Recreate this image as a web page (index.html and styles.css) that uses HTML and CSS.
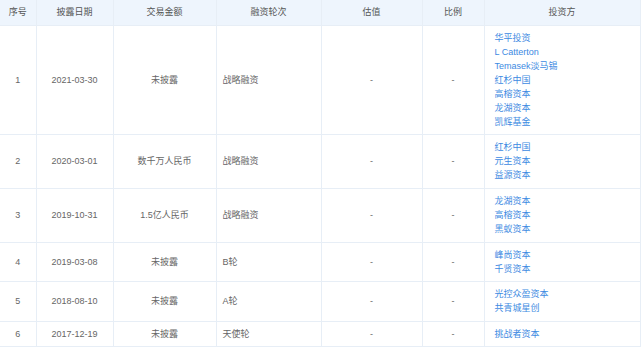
FILE: index.html
```html
<!DOCTYPE html>
<html lang="zh">
<head>
<meta charset="utf-8">
<link rel="stylesheet" href="styles.css">
</head>
<body>
<table class="fin">
  <colgroup>
    <col class="c1"><col class="c2"><col class="c3"><col class="c4"><col class="c5"><col class="c6"><col class="c7">
  </colgroup>
  <thead>
    <tr><th>序号</th><th>披露日期</th><th>交易金额</th><th>融资轮次</th><th>估值</th><th>比例</th><th>投资方</th></tr>
  </thead>
  <tbody>
    <tr><td>1</td><td>2021-03-30</td><td>未披露</td><td class="round">战略融资</td><td>-</td><td>-</td>
      <td class="inv"><a>华平投资</a><a>L Catterton</a><a>Temasek淡马锡</a><a>红杉中国</a><a>高榕资本</a><a>龙湖资本</a><a>凯辉基金</a></td></tr>
    <tr class="tall"><td>2</td><td>2020-03-01</td><td>数千万人民币</td><td class="round">战略融资</td><td>-</td><td>-</td>
      <td class="inv"><a>红杉中国</a><a>元生资本</a><a>益源资本</a></td></tr>
    <tr class="tall"><td>3</td><td>2019-10-31</td><td>1.5亿人民币</td><td class="round">战略融资</td><td>-</td><td>-</td>
      <td class="inv"><a>龙湖资本</a><a>高榕资本</a><a>黑蚁资本</a></td></tr>
    <tr><td>4</td><td>2019-03-08</td><td>未披露</td><td class="round">B轮</td><td>-</td><td>-</td>
      <td class="inv"><a>峰尚资本</a><a>千贤资本</a></td></tr>
    <tr class="tall"><td>5</td><td>2018-08-10</td><td>未披露</td><td class="round">A轮</td><td>-</td><td>-</td>
      <td class="inv"><a>光控众盈资本</a><a>共青城星创</a></td></tr>
    <tr><td>6</td><td>2017-12-19</td><td>未披露</td><td class="round">天使轮</td><td>-</td><td>-</td>
      <td class="inv"><a>挑战者资本</a></td></tr>
  </tbody>
</table>
</body>
</html>
```
FILE: styles.css
```css
html, body {
  margin: 0;
  padding: 0;
  background: #ffffff;
}
body {
  font-family: "Liberation Sans", Arial, "Noto Sans CJK SC", sans-serif;
  font-size: 9px;
  line-height: 14px;
  color: #666666;
}
.fin {
  border-collapse: collapse;
  table-layout: fixed;
  width: 640px;
}
.c1 { width: 36px; }
.c2 { width: 77px; }
.c3 { width: 103px; }
.c4 { width: 105px; }
.c5 { width: 101px; }
.c6 { width: 62px; }
.c7 { width: 156px; }
.fin th,
.fin td {
  border: 1px solid #e7eef6;
  padding: 5px 4px;
  text-align: center;
  vertical-align: middle;
  font-weight: normal;
}
.fin tr.tall td {
  padding-bottom: 6px;
}
.fin th:first-child,
.fin td:first-child {
  border-left: none;
}
.fin thead tr {
  background: #eef5fd;
}
.fin th {
  color: #555555;
  padding: 5px 4px 6px 4px;
  border-top: none;
}
.fin td.round {
  text-align: left;
  padding-left: 6px;
}
.fin td.inv {
  text-align: left;
  padding-left: 10px;
}
.inv a {
  display: block;
  color: #3d8ae2;
  text-decoration: none;
}
```
